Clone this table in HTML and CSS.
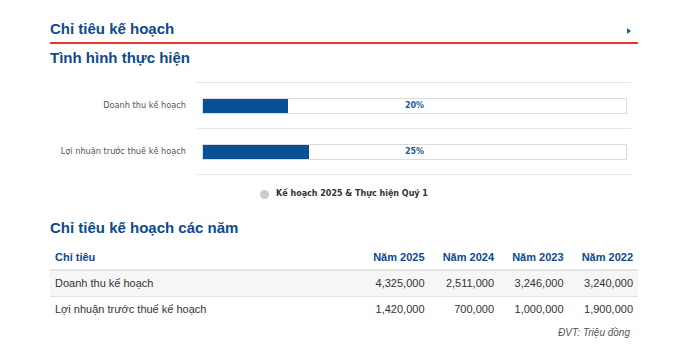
FILE: index.html
```html
<!DOCTYPE html>
<html lang="vi">
<head>
<meta charset="utf-8">
<title>Chỉ tiêu kế hoạch</title>
<link rel="stylesheet" href="styles.css">
</head>
<body>
<div class="wrap">
  <div class="head">
    <h2 class="title">Chỉ tiêu kế hoạch</h2>
    <span class="arrow"></span>
  </div>
  <h3 class="sub">Tình hình thực hiện</h3>

  <div class="chart">
    <div class="row">
      <div class="label">Doanh thu kế hoạch</div>
      <div class="plot">
        <div class="bar"><div class="fill" style="width:20%"></div><span class="pct">20%</span></div>
      </div>
    </div>
    <div class="row">
      <div class="label">Lợi nhuận trước thuế kế hoạch</div>
      <div class="plot">
        <div class="bar"><div class="fill" style="width:25%"></div><span class="pct">25%</span></div>
      </div>
    </div>
    <div class="row last">
      <div class="label"></div>
      <div class="plot"></div>
    </div>
  </div>

  <div class="legend"><span class="dot"></span>Kế hoạch 2025 &amp; Thực hiện Quý 1</div>

  <h3 class="sub sub2">Chỉ tiêu kế hoạch các năm</h3>

  <table class="tbl">
    <thead>
      <tr>
        <th class="first">Chỉ tiêu</th>
        <th>Năm 2025</th>
        <th>Năm 2024</th>
        <th>Năm 2023</th>
        <th>Năm 2022</th>
      </tr>
    </thead>
    <tbody>
      <tr class="alt">
        <td class="first">Doanh thu kế hoạch</td>
        <td>4,325,000</td>
        <td>2,511,000</td>
        <td>3,246,000</td>
        <td>3,240,000</td>
      </tr>
      <tr>
        <td class="first">Lợi nhuận trước thuế kế hoạch</td>
        <td>1,420,000</td>
        <td>700,000</td>
        <td>1,000,000</td>
        <td>1,900,000</td>
      </tr>
    </tbody>
  </table>
  <div class="unit">ĐVT: Triệu đồng</div>
</div>
</body>
</html>
```

FILE: styles.css
```css
* { box-sizing: border-box; }
html, body { margin: 0; padding: 0; background: #fff; }
body { font-family: "Liberation Sans", Arial, sans-serif; color: #333; }

.wrap { width: 588px; margin-left: 50px; padding-top: 18px; }

.head {
  display: flex;
  align-items: center;
  justify-content: space-between;
  padding-bottom: 2px;
  border-bottom: 2px solid #e8362c;
}
.title {
  margin: 0;
  font-size: 15px;
  line-height: 22px;
  font-weight: bold;
  color: #0d4a8c;
}
.arrow {
  width: 0; height: 0;
  margin-right: 7px;
  margin-top: 4px;
  border-top: 3px solid transparent;
  border-bottom: 3px solid transparent;
  border-left: 4px solid #1160b0;
}

.sub {
  margin: 3px 0 0 0;
  font-size: 15px;
  line-height: 22px;
  font-weight: bold;
  color: #0d4a8c;
}
.sub2 { margin-top: 16px; }

.chart { margin-top: 13px; }
.row {
  display: grid;
  grid-template-columns: 147px 434px;
}
.label {
  text-align: right;
  padding-right: 11px;
  align-self: center;
  font-family: "DejaVu Sans", Verdana, sans-serif;
  font-size: 8.2px;
  color: #555;
}
.plot {
  border-top: 1px solid #e6e6e6;
  height: 46px;
  display: flex;
  align-items: center;
  padding: 0 4px 0 5px;
}
.row.last .plot { height: 1px; }
.bar {
  position: relative;
  width: 100%;
  height: 16px;
  border: 1px solid #dcdcdc;
  background: #fff;
}
.fill { height: 100%; background: #0a5096; }
.pct {
  position: absolute;
  left: 0; right: 0; top: 0;
  text-align: center;
  font-family: "DejaVu Sans", Verdana, sans-serif;
  font-weight: bold;
  font-size: 8px;
  line-height: 14px;
  color: #1a5c9e;
}

.legend {
  margin-top: 12px;
  display: flex;
  align-items: center;
  justify-content: center;
  font-family: "DejaVu Sans", Verdana, sans-serif;
  font-size: 8px;
  line-height: 14px;
  font-weight: bold;
  color: #333;
}
.dot {
  width: 9px; height: 9px;
  border-radius: 50%;
  background: #cccccc;
  margin-right: 7px;
}

.tbl {
  width: 100%;
  border-collapse: collapse;
  font-size: 11px;
}
.tbl th {
  color: #0d4a8c;
  font-weight: bold;
  text-align: right;
  padding: 11px 5px 5px 5px;
  line-height: 14px;
  border-bottom: 2px solid #e6e6e6;
  width: 69.5px;
}
.tbl th.first, .tbl td.first { text-align: left; width: auto; }
.tbl td {
  text-align: right;
  padding: 5px 5px 6px 5px;
  line-height: 14px;
  color: #333;
}
.tbl tr.alt td { background: #f6f6f6; border-bottom: 1px solid #e3e3e3; }

.unit {
  text-align: right;
  padding-right: 8px;
  margin-top: 4px;
  font-size: 10px;
  font-style: italic;
  line-height: 14px;
  color: #555;
}
```
